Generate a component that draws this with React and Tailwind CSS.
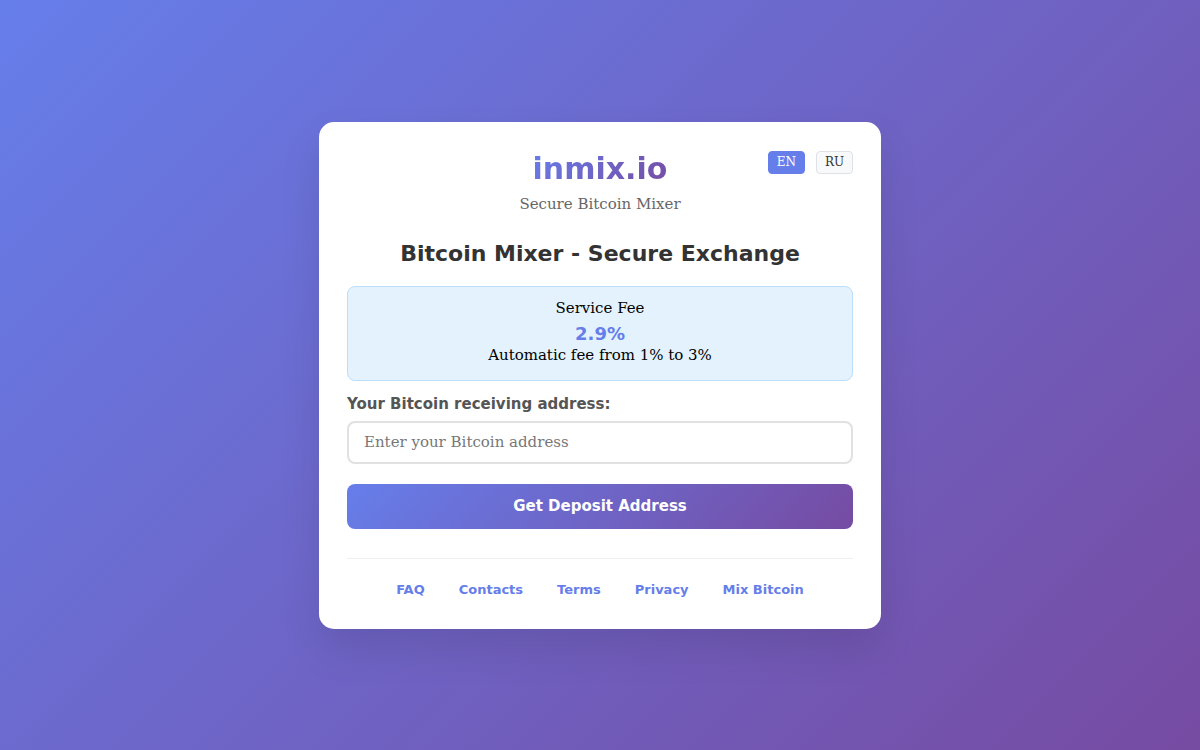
export default function App() {
  const links = ['FAQ', 'Contacts', 'Terms', 'Privacy', 'Mix Bitcoin'];

  return (
    <div className="min-h-screen w-full flex items-center justify-center bg-[linear-gradient(135deg,#667eea_0%,#764ba2_100%)] font-['DejaVu_Serif',serif]">
      <div className="w-[562px] bg-white rounded-[15px] px-[28px] pt-[29px] pb-[31px] shadow-[0_20px_40px_rgba(0,0,0,0.1)]">
        <div className="relative text-center">
          <h1 className="text-[30px] leading-[35px] font-bold font-['DejaVu_Sans',sans-serif] bg-[linear-gradient(135deg,#667eea_0%,#764ba2_100%)] bg-clip-text text-transparent inline-block">
            inmix.io
          </h1>
          <p className="mt-[9px] text-[15px] leading-[18px] text-[#666]">Secure Bitcoin Mixer</p>
          <div className="absolute top-0 right-0 flex gap-[11px]">
            <button className="w-[37px] h-[23px] rounded-[4px] bg-[#667eea] text-white text-[12px] leading-none border border-[#667eea]">
              EN
            </button>
            <button className="w-[37px] h-[23px] rounded-[4px] bg-[#f8f9fa] text-[#333] text-[12px] leading-none border border-[#dee2e6]">
              RU
            </button>
          </div>
        </div>

        <h2 className="mt-[28px] text-center text-[22px] leading-[26px] font-bold text-[#333] font-['DejaVu_Sans',sans-serif]">
          Bitcoin Mixer - Secure Exchange
        </h2>

        <div className="mt-[19px] bg-[#e3f2fd] border border-[#bbdefb] rounded-[8px] pt-[12px] pb-[16px] text-center text-black">
          <div className="text-[15px] leading-[18px]">Service Fee</div>
          <div className="mt-[6px] text-[18px] leading-[21px] font-bold text-[#667eea] font-['DejaVu_Sans',sans-serif]">2.9%</div>
          <div className="mt-[2px] text-[15px] leading-[18px]">Automatic fee from 1% to 3%</div>
        </div>

        <label className="block mt-[14px] text-[15px] leading-[18px] font-bold text-[#555] font-['DejaVu_Sans',sans-serif]">
          Your Bitcoin receiving address:
        </label>
        <input
          type="text"
          placeholder="Enter your Bitcoin address"
          className="mt-[8px] block w-full h-[43px] px-[15px] border-2 border-[#e1e1e1] rounded-[8px] text-[15px] text-[#333] placeholder:text-[#777] outline-none font-['DejaVu_Serif',serif]"
        />

        <button className="mt-[20px] w-full h-[45px] rounded-[8px] bg-[linear-gradient(135deg,#667eea_0%,#764ba2_100%)] text-white text-[15px] font-bold font-['DejaVu_Sans',sans-serif]">
          Get Deposit Address
        </button>

        <div className="mt-[29px] border-t border-[#eee] pt-[23px] flex justify-center gap-[34px]">
          {links.map((l) => (
            <a key={l} href="#" className="text-[13px] leading-[16px] font-bold text-[#667eea] font-['DejaVu_Sans',sans-serif]">
              {l}
            </a>
          ))}
        </div>
      </div>
    </div>
  );
}
